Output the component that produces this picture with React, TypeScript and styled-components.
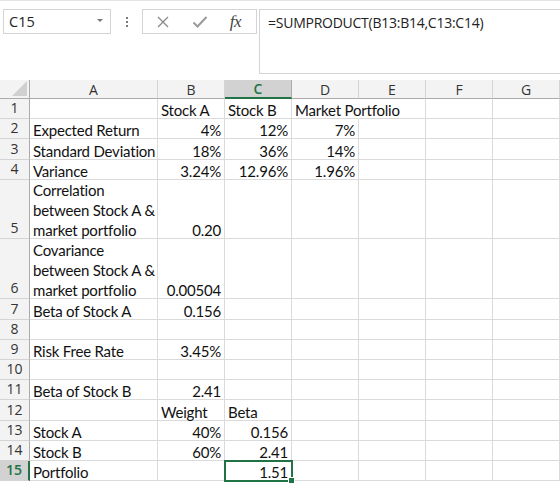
import styled, { createGlobalStyle } from "styled-components";
import React from "react";

const GlobalStyle = createGlobalStyle`
  html, body {
    margin: 0;
    padding: 0;
    background: #ffffff;
    overflow: hidden;
  }
`;

const GREEN = "#217346";
const GRID = "#dadada";

const Page = styled.div`
  width: 560px;
  height: 488px;
  overflow: hidden;
  background: #fff;
`;

/* ---------- formula bar ---------- */

const Toolbar = styled.div`
  height: 80px;
  border-top: 1px solid #e3e3e3;
  display: flex;
  align-items: flex-start;
  padding-top: 8px;
  box-sizing: border-box;
`;

const NameBox = styled.div`
  margin-left: 3px;
  width: 108px;
  height: 25px;
  box-sizing: border-box;
  border: 1px solid #d4d4d4;
  display: flex;
  align-items: center;
  justify-content: space-between;
  padding: 0 7px 0 5px;
  font: 14.5px "Open Sans", sans-serif;
  color: #222;
`;

const Caret = styled.span`
  width: 0;
  height: 0;
  border-left: 3px solid transparent;
  border-right: 3px solid transparent;
  border-top: 3px solid #777;
  margin-top: -3px;
`;

const Dots = styled.div`
  width: 31px;
  height: 25px;
  display: flex;
  flex-direction: column;
  align-items: center;
  justify-content: center;
  gap: 2px;
`;

const Dot = styled.span`
  width: 2px;
  height: 2px;
  background: #7a7a7a;
`;

const FxBox = styled.div`
  width: 115px;
  height: 25px;
  box-sizing: border-box;
  border: 1px solid #d4d4d4;
  display: flex;
  align-items: center;
  justify-content: space-around;
  padding: 0 4px 0 2px;
`;

const Fx = styled.span`
  font: italic 17px "Liberation Serif", serif;
  color: #444;
  letter-spacing: -0.5px;
`;

const FormulaInput = styled.div`
  margin-left: 2px;
  flex: 1;
  height: 65px;
  box-sizing: border-box;
  border: 1px solid #d4d4d4;
  border-right: none;
  padding: 3px 8px;
  font: 14px "Open Sans", sans-serif;
  letter-spacing: -0.25px;
  color: #222;
  line-height: 20px;
`;

/* ---------- sheet ---------- */

const Sheet = styled.div<{ $rows: string }>`
  display: grid;
  grid-template-columns: 30px 128px repeat(5, 67px) 1fr;
  grid-template-rows: ${(p) => p.$rows};
`;

const Corner = styled.div`
  background: #f3f3f3;
  border-right: 1px solid #ababab;
  border-bottom: 1px solid #ababab;
  display: flex;
  align-items: flex-end;
  justify-content: flex-end;
  padding: 0 2px 2px 0;
`;

const ColHead = styled.div<{ $active?: boolean }>`
  background: ${(p) => (p.$active ? "#d2d2d2" : "#f3f3f3")};
  border-right: 1px solid ${(p) => (p.$active ? "#ababab" : "#d4d4d4")};
  border-bottom: ${(p) => (p.$active ? `2px solid ${GREEN}` : "1px solid #ababab")};
  display: flex;
  align-items: center;
  justify-content: center;
  font: ${(p) => (p.$active ? 600 : 400)} 14px "Open Sans", sans-serif;
  color: ${(p) => (p.$active ? GREEN : "#333")};
`;

const RowHead = styled.div<{ $active?: boolean }>`
  background: ${(p) => (p.$active ? "#d2d2d2" : "#f3f3f3")};
  border-right: ${(p) => (p.$active ? `2px solid ${GREEN}` : "1px solid #ababab")};
  border-bottom: 1px solid #d4d4d4;
  display: flex;
  align-items: flex-end;
  justify-content: center;
  padding-bottom: 1px;
  font: ${(p) => (p.$active ? 600 : 400)} 14px/18px "Open Sans", sans-serif;
  color: ${(p) => (p.$active ? GREEN : "#333")};
`;

const Cell = styled.div<{ $right?: boolean; $open?: boolean; $selected?: boolean }>`
  position: relative;
  min-width: 0;
  display: flex;
  align-items: flex-end;
  justify-content: ${(p) => (p.$right ? "flex-end" : "flex-start")};
  padding: 0 3px 0 3px;
  border-right: 1px solid ${(p) => (p.$open ? "transparent" : GRID)};
  border-bottom: 1px solid ${GRID};
  font: 15px/20px Lato, "Liberation Sans", sans-serif;
  letter-spacing: -0.2px;
  color: #111;
  white-space: nowrap;
  overflow: visible;

  ${(p) =>
    p.$selected &&
    `
    &::after {
      content: "";
      position: absolute;
      left: -1px;
      top: -1px;
      right: -2px;
      bottom: -2px;
      border: 2px solid ${GREEN};
    }
  `}
`;

const Value = styled.span`
  margin-bottom: -2px;
`;

const Handle = styled.span`
  position: absolute;
  right: -4px;
  bottom: -4px;
  width: 5px;
  height: 5px;
  background: ${GREEN};
  border: 1px solid #fff;
  z-index: 2;
`;

type CellDef = { v: React.ReactNode; r?: boolean };
type RowDef = { h: number; cells: (CellDef | null)[] };

const L = (v: React.ReactNode): CellDef => ({ v });
const R = (v: React.ReactNode): CellDef => ({ v, r: true });

const rows: RowDef[] = [
  { h: 20, cells: [null, L("Stock A"), L("Stock B"), L("Market Portfolio")] },
  { h: 20.3, cells: [L("Expected Return"), R("4%"), R("12%"), R("7%")] },
  { h: 20.3, cells: [L("Standard Deviation"), R("18%"), R("36%"), R("14%")] },
  { h: 20.3, cells: [L("Variance"), R("3.24%"), R("12.96%"), R("1.96%")] },
  {
    h: 59.5,
    cells: [
      L(
        <>
          Correlation
          <br />
          between Stock A &amp;
          <br />
          market portfolio
        </>
      ),
      R("0.20"),
    ],
  },
  {
    h: 60,
    cells: [
      L(
        <>
          Covariance
          <br />
          between Stock A &amp;
          <br />
          market portfolio
        </>
      ),
      R("0.00504"),
    ],
  },
  { h: 20.2, cells: [L("Beta of Stock A"), R("0.156")] },
  { h: 20.2, cells: [] },
  { h: 20.2, cells: [L("Risk Free Rate"), R("3.45%")] },
  { h: 20.2, cells: [] },
  { h: 20.2, cells: [L("Beta of Stock B"), R("2.41")] },
  { h: 20.2, cells: [null, L("Weight"), L("Beta")] },
  { h: 20.2, cells: [L("Stock A"), R("40%"), R("0.156")] },
  { h: 20.2, cells: [L("Stock B"), R("60%"), R("2.41")] },
  { h: 20.3, cells: [L("Portfolio"), null, R("1.51")] },
];

const COLS = ["A", "B", "C", "D", "E", "F", "G"];

function CrossIcon() {
  return (
    <svg width="14" height="14" viewBox="0 0 14 14">
      <path d="M2 2 L12 12 M12 2 L2 12" stroke="#8a8a8a" strokeWidth="1.3" fill="none" />
    </svg>
  );
}

function CheckIcon() {
  return (
    <svg width="16" height="14" viewBox="0 0 16 14">
      <path d="M1.5 7.5 L5.5 11.5 L14.5 2" stroke="#9a9a9a" strokeWidth="2" fill="none" />
    </svg>
  );
}

function SelectAll() {
  return (
    <svg width="15" height="15" viewBox="0 0 15 15">
      <polygon points="15,0 15,15 0,15" fill="#d0d0d0" />
    </svg>
  );
}

export default function App() {
  const rowTemplate = ["19px", ...rows.map((r) => `${r.h}px`)].join(" ");

  return (
    <Page>
      <GlobalStyle />
      <Toolbar>
        <NameBox>
          C15
          <Caret />
        </NameBox>
        <Dots>
          <Dot />
          <Dot />
          <Dot />
        </Dots>
        <FxBox>
          <CrossIcon />
          <CheckIcon />
          <Fx>fx</Fx>
        </FxBox>
        <FormulaInput>=SUMPRODUCT(B13:B14,C13:C14)</FormulaInput>
      </Toolbar>

      <Sheet $rows={rowTemplate}>
        <Corner>
          <SelectAll />
        </Corner>
        {COLS.map((c) => (
          <ColHead key={c} $active={c === "C"}>
            {c}
          </ColHead>
        ))}

        {rows.map((row, ri) => {
          const n = ri + 1;
          return (
            <React.Fragment key={n}>
              <RowHead $active={n === 15}>{n}</RowHead>
              {COLS.map((c, ci) => {
                const def = row.cells[ci];
                const selected = n === 15 && c === "C";
                return (
                  <Cell
                    key={c}
                    $right={def?.r}
                    $open={n === 1 && c === "D"}
                    $selected={selected}
                  >
                    {def && <Value>{def.v}</Value>}
                    {selected && <Handle />}
                  </Cell>
                );
              })}
            </React.Fragment>
          );
        })}
      </Sheet>
    </Page>
  );
}
